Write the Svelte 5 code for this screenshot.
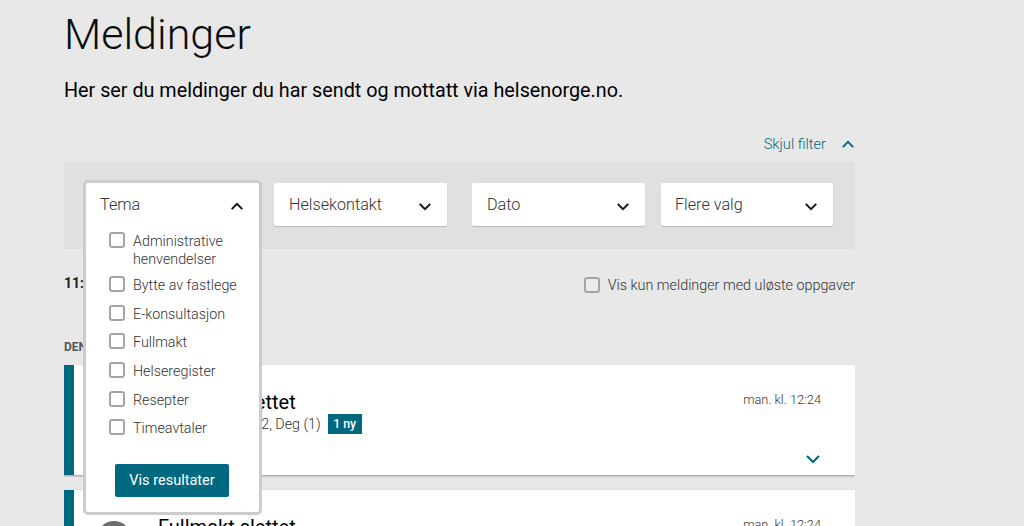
<script lang="ts">
	const themes = [
		'Administrative henvendelser',
		'Bytte av fastlege',
		'E-konsultasjon',
		'Fullmakt',
		'Helseregister',
		'Resepter',
		'Timeavtaler'
	];
	const selects = [
		{ label: 'Helsekontakt', cls: 'helse' },
		{ label: 'Dato', cls: 'dato' },
		{ label: 'Flere valg', cls: 'flere' }
	];
	const messages = [
		{ title: 'Fullmakt slettet', sub: 'Saksbehandlere 2, Deg (1)', fresh: true },
		{ title: 'Fullmakt slettet', sub: 'Saksbehandlere, Deg (1)', fresh: false }
	];
</script>

{#snippet chevron(up: boolean)}
	<svg class="chevron" viewBox="0 0 16 10" width="14" height="9" class:up>
		<path d="M2 2 L8 8 L14 2" fill="none" stroke="currentColor" stroke-width="2.2" />
	</svg>
{/snippet}

<main class="page">
	<h1>Meldinger</h1>
	<p class="intro">Her ser du meldinger du har sendt og mottatt via helsenorge.no.</p>

	<div class="toggle-row">
		<button class="toggle">Skjul filter {@render chevron(true)}</button>
	</div>

	<section class="filters">
		<div class="slot">
			<div class="dropdown">
				<div class="select-head">
					<span>Tema</span>
					{@render chevron(true)}
				</div>
				<ul>
					{#each themes as theme}
						<li><span class="box"></span><span class="name">{theme}</span></li>
					{/each}
				</ul>
				<button class="primary">Vis resultater</button>
			</div>
		</div>
		{#each selects as select}
			<div class="select {select.cls}">
				<div class="select-head">
					<span>{select.label}</span>
					{@render chevron(false)}
				</div>
			</div>
		{/each}
	</section>

	<div class="count-row">
		<strong>11: meldinger</strong>
		<label class="only-open"><span class="box"></span>Vis kun meldinger med uløste oppgaver</label>
	</div>

	<h2>DENNE UKEN</h2>

	{#each messages as message}
		<article class="card">
			<div class="avatar"></div>
			<div class="body">
				<h3>{message.title}</h3>
				<div class="sub">
					{message.sub}
					{#if message.fresh}<span class="badge">1 ny</span>{/if}
				</div>
			</div>
			<div class="meta">
				<time>man. kl. 12:24</time>
				<span class="expand">{@render chevron(false)}</span>
			</div>
		</article>
	{/each}
</main>

<style>
	:global(body) {
		background: #e8e8e8;
		color: #000;
		font-family: Roboto, 'Liberation Sans', sans-serif;
		overflow: hidden;
	}
	.page {
		width: 791px;
		height: 526px;
		margin-left: 64px;
		overflow: hidden;
		box-sizing: border-box;
	}
	h1 {
		margin: 0;
		padding-top: 8px;
		font-size: 43px;
		line-height: 52px;
		font-weight: 300;
		color: #0c0c0c;
	}
	.intro {
		margin: 18px 0 0;
		font-size: 19.75px;
		line-height: 26px;
	}
	.toggle-row {
		display: flex;
		justify-content: flex-end;
		margin-top: 28px;
		height: 24px;
	}
	.toggle {
		display: flex;
		align-items: center;
		gap: 15px;
		padding: 0;
		border: 0;
		background: none;
		color: #00697f;
		font: 300 14.6px Roboto, sans-serif;
	}
	.filters {
		display: flex;
		align-items: flex-start;
		height: 86.5px;
		padding: 21px 22px 0 22px;
		box-sizing: border-box;
		margin-top: 6px;
		background: #e0e0e0;
	}
	.slot {
		width: 172px;
		height: 43px;
		position: relative;
		flex: none;
	}
	.select {
		width: 173px;
		flex: none;
		background: #fff;
		border-radius: 2px;
		box-shadow: 0 1px 1px rgba(0, 0, 0, 0.18);
	}
	.helse {
		margin-left: 16px;
	}
	.dato {
		margin-left: 25px;
	}
	.flere {
		width: 172px;
		margin-left: 16px;
	}
	.select-head {
		display: flex;
		align-items: center;
		justify-content: space-between;
		height: 43px;
		padding: 0 15px 0 15px;
		font-size: 16.2px;
		font-weight: 300;
		color: #333;
	}
	.flere .select-head {
		padding-left: 14px;
	}
	.select-head .chevron {
		margin-top: 4px;
		color: #111;
	}
	.chevron.up {
		transform: rotate(180deg);
	}
	.dropdown {
		position: absolute;
		top: -3px;
		left: -3px;
		z-index: 2;
		width: 172.5px;
		height: 329px;
		background: #fff;
		border: 3px solid #ccc;
		border-radius: 5px;
	}
	.dropdown .select-head {
		height: 42px;
		padding-left: 14px;
	}
	ul {
		list-style: none;
		margin: 0;
		padding: 7px 0 0 23px;
	}
	li {
		display: flex;
		align-items: flex-start;
		gap: 8px;
		min-height: 28.7px;
		font-size: 14.3px;
		line-height: 18px;
		font-weight: 300;
		color: #333;
	}
	li .name {
		width: 112px;
	}
	.box {
		flex: none;
		width: 12px;
		height: 12px;
		border: 2px solid #a5a5a5;
		border-radius: 3px;
		background: #fff;
	}
	li:first-child {
		min-height: 44px;
	}
	.primary {
		display: block;
		width: 114px;
		height: 33px;
		margin: 16px 0 0 29px;
		padding: 0;
		border: 0;
		border-radius: 2px;
		background: #00697f;
		color: #fff;
		font: 400 14.5px Roboto, sans-serif;
	}
	.count-row {
		display: flex;
		justify-content: space-between;
		align-items: center;
		margin-top: 26.5px;
		height: 20px;
		font-size: 14.35px;
	}
	.count-row strong {
		margin-top: -4px;
		font-size: 14px;
		font-weight: 700;
		color: #222;
	}
	.only-open {
		display: flex;
		align-items: center;
		gap: 8px;
		font-weight: 300;
		color: #333;
	}
	.only-open .box {
		background: #ececec;
	}
	h2 {
		margin: 44px 0 0;
		font-size: 12px;
		line-height: 16px;
		font-weight: 700;
		color: #555;
	}
	.card {
		display: flex;
		height: 109.5px;
		margin: 10px 0 15.5px;
		box-sizing: border-box;
		border-left: 10px solid #00697f;
		background: #fff;
		box-shadow: 0 1px 2px rgba(0, 0, 0, 0.35);
	}
	.card + .card {
		margin-top: 0;
	}
	.avatar {
		flex: none;
		width: 34px;
		height: 34px;
		margin: 31px 0 0 23px;
		border-radius: 50%;
		background: #6e6e6e;
	}
	.body {
		flex: 1;
		padding: 25px 0 0 27px;
	}
	h3 {
		margin: 0;
		font-size: 20px;
		line-height: 24px;
		font-weight: 400;
	}
	.sub {
		display: flex;
		align-items: center;
		gap: 7px;
		font-size: 14.3px;
		line-height: 20px;
		font-weight: 300;
		color: #333;
	}
	.badge {
		height: 20px;
		padding: 0 5.5px;
		background: #00697f;
		color: #fff;
		font-size: 12.3px;
		line-height: 20px;
		font-weight: 500;
	}
	.meta {
		display: flex;
		flex-direction: column;
		align-items: flex-end;
		justify-content: space-between;
		padding: 27px 34px 11px 0;
		box-sizing: border-box;
	}
	time {
		font-size: 12.8px;
		line-height: 16px;
		font-weight: 300;
		color: #333;
	}
	.expand {
		display: flex;
		color: #00697f;
	}
	.expand .chevron {
		width: 16px;
		height: 10px;
	}
</style>
